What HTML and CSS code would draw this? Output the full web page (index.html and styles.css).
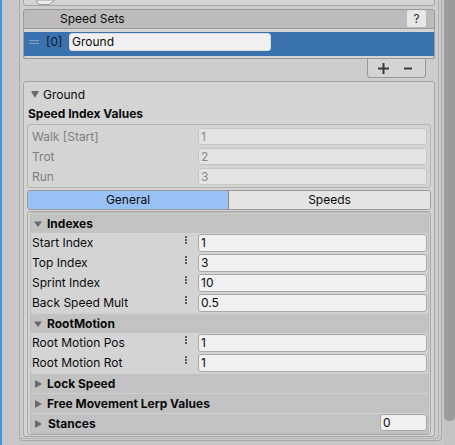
FILE: index.html
```html
<!DOCTYPE html>
<html>
<head>
<meta charset="utf-8">
<link rel="stylesheet" href="styles.css">
</head>
<body>
<div class="app">
  <div class="focus"></div>
  <div class="main">
    <div class="outer">
      <div class="inner">
        <div class="topbox">
          <svg class="topicon" width="20" height="6" viewBox="0 0 20 6"><path d="M1 0 V2 Q1 4.5 4 4.5 H12 Q14 4.5 15 3 L17.5 1.5 Q18.5 0.8 18 0 Z" fill="#ebebeb" stroke="#9c9c9c" stroke-width="1"/></svg>
        </div>
        <div class="list-head">
          <span class="list-title">Speed Sets</span>
          <span class="help">?</span>
        </div>
        <div class="list-body">
          <div class="row-sel">
            <span class="handle"><i></i><i></i></span>
            <span class="idx">[0]</span>
            <span class="tf">Ground</span>
          </div>
        </div>
        <div class="list-foot">
          <svg width="11" height="11" viewBox="0 0 11 11"><rect x="0" y="4.5" width="11" height="2" fill="#3a3a3a"/><rect x="4.5" y="0" width="2" height="11" fill="#3a3a3a"/></svg>
          <svg class="minus" width="8" height="11" viewBox="0 0 8 11"><rect x="0" y="4.5" width="8" height="2" fill="#3a3a3a"/></svg>
        </div>
        <div class="gbox">
          <div class="gfold">
            <svg class="tri-g" width="8" height="7" viewBox="0 0 8 7"><polygon points="0,0 8,0 4,7" fill="#6a6a6a"/></svg>
            <span>Ground</span>
          </div>
          <div class="siv">Speed Index Values</div>
          <div class="disabled">
            <span class="dlabel">Walk [Start]</span><span class="dfield">1</span>
            <span class="dlabel">Trot</span><span class="dfield">2</span>
            <span class="dlabel">Run</span><span class="dfield">3</span>
          </div>
          <div class="tabs">
            <div class="tab on">General</div>
            <div class="tab">Speeds</div>
          </div>
          <div class="content">
            <div class="content-in">
              <div class="hdr">
                <svg class="tri" width="8" height="8" viewBox="0 0 8 8"><polygon points="0,1.5 8,1.5 4,7" fill="#6a6a6a"/></svg>
                <span>Indexes</span>
              </div>
              <div class="frow"><span class="flabel">Start Index</span><svg class="dots" width="2" height="8" viewBox="0 0 2 8"><rect y="0" width="2" height="2" fill="#5a5a5a"/><rect y="3" width="2" height="2" fill="#5a5a5a"/><rect y="6" width="2" height="2" fill="#5a5a5a"/></svg><span class="field">1</span></div>
              <div class="frow"><span class="flabel">Top Index</span><svg class="dots" width="2" height="8" viewBox="0 0 2 8"><rect y="0" width="2" height="2" fill="#5a5a5a"/><rect y="3" width="2" height="2" fill="#5a5a5a"/><rect y="6" width="2" height="2" fill="#5a5a5a"/></svg><span class="field">3</span></div>
              <div class="frow"><span class="flabel">Sprint Index</span><svg class="dots" width="2" height="8" viewBox="0 0 2 8"><rect y="0" width="2" height="2" fill="#5a5a5a"/><rect y="3" width="2" height="2" fill="#5a5a5a"/><rect y="6" width="2" height="2" fill="#5a5a5a"/></svg><span class="field">10</span></div>
              <div class="frow"><span class="flabel">Back Speed Mult</span><svg class="dots" width="2" height="8" viewBox="0 0 2 8"><rect y="0" width="2" height="2" fill="#5a5a5a"/><rect y="3" width="2" height="2" fill="#5a5a5a"/><rect y="6" width="2" height="2" fill="#5a5a5a"/></svg><span class="field">0.5</span></div>
              <div class="hdr">
                <svg class="tri" width="8" height="8" viewBox="0 0 8 8"><polygon points="0,1.5 8,1.5 4,7" fill="#6a6a6a"/></svg>
                <span>RootMotion</span>
              </div>
              <div class="frow"><span class="flabel">Root Motion Pos</span><svg class="dots" width="2" height="8" viewBox="0 0 2 8"><rect y="0" width="2" height="2" fill="#5a5a5a"/><rect y="3" width="2" height="2" fill="#5a5a5a"/><rect y="6" width="2" height="2" fill="#5a5a5a"/></svg><span class="field">1</span></div>
              <div class="frow"><span class="flabel">Root Motion Rot</span><svg class="dots" width="2" height="8" viewBox="0 0 2 8"><rect y="0" width="2" height="2" fill="#5a5a5a"/><rect y="3" width="2" height="2" fill="#5a5a5a"/><rect y="6" width="2" height="2" fill="#5a5a5a"/></svg><span class="field">1</span></div>
              <div class="hdr">
                <svg class="tri" width="8" height="8" viewBox="0 0 8 8"><polygon points="1,0 8,4 1,8" fill="#6a6a6a"/></svg>
                <span>Lock Speed</span>
              </div>
              <div class="hdr">
                <svg class="tri" width="8" height="8" viewBox="0 0 8 8"><polygon points="1,0 8,4 1,8" fill="#6a6a6a"/></svg>
                <span>Free Movement Lerp Values</span>
              </div>
              <div class="hdr">
                <svg class="tri" width="8" height="8" viewBox="0 0 8 8"><polygon points="1,0 8,4 1,8" fill="#6a6a6a"/></svg>
                <span class="st">Stances</span>
                <span class="sfield">0</span>
              </div>
            </div>
          </div>
        </div>
      </div>
    </div>
  </div>
  <div class="scroll"><div class="thumb"></div></div>
</div>
</body>
</html>
```

FILE: styles.css
```css
* { box-sizing: border-box; }
html, body { margin: 0; padding: 0; }
body {
  width: 455px;
  height: 445px;
  overflow: hidden;
  background: #c8c8c8;
  font-family: Inter, "Noto Sans", "Liberation Sans", sans-serif;
  font-size: 12px;
  color: #0b0b0b;
}
.app { display: flex; height: 445px; }
.focus { width: 2px; flex: none; background: #3a96de; }
.main { flex: none; width: 442px; padding-left: 17px; }
.scroll { width: 11px; flex: none; background: #c3c3c3; }
.thumb { height: 421px; background: #9b9b9b; border-radius: 0 0 5px 5px; }

.outer {
  width: 423px;
  border: 1px solid #a9a9a9;
  border-top: none;
  border-radius: 0 0 4px 4px;
  padding: 0 2px 1px 0;
  background: #cdcdcd;
}
.inner {
  border-right: 1px solid #b2b2b2;
  border-bottom: 1px solid #b2b2b2;
  border-radius: 0 0 4px 0;
  padding: 0 3px 1px 3px;
}

.topbox {
  height: 6px;
  border: 1px solid #a6a6a6;
  border-top: none;
  border-radius: 0 0 3px 3px;
  background: #d4d4d4;
  margin-bottom: 3px;
  display: flex;
  align-items: flex-start;
}
.topicon { margin-left: 12px; display: block; }

.list-head {
  height: 20px;
  border: 1px solid #999999;
  border-radius: 3px 3px 0 0;
  background: #bcbcbc;
  display: flex;
  align-items: flex-start;
  padding-left: 36px;
}
.list-title { line-height: 18px; }
.help {
  margin-left: auto;
  margin-right: 8px;
  width: 19px;
  height: 17px;
  background: #e7e7e7;
  border-radius: 2px;
  text-align: center;
  line-height: 17px;
  color: #2a2a2a;
}
.list-body {
  border: 1px solid #999999;
  border-top: none;
  border-radius: 0 0 3px 3px;
  padding: 3px 0 2px;
  background: #d4d4d4;
}
.row-sel {
  height: 24px;
  background: #3a72b0;
  display: flex;
  align-items: flex-start;
  padding: 1px 0 0 5px;
}
.handle {
  width: 10px;
  height: 18px;
  display: flex;
  flex-direction: column;
  justify-content: center;
  gap: 2px;
}
.handle i { display: block; height: 1px; background: #8b9bb0; }
.idx { margin-left: 7px; width: 23px; line-height: 18px; color: #0e1a2a; }
.tf {
  width: 202px;
  height: 18px;
  background: #f0f0f0;
  border: 1px solid #dcdcdc;
  border-radius: 3px;
  padding-left: 2px;
  line-height: 16px;
}
.list-foot {
  width: 59px;
  height: 19px;
  margin-left: auto;
  margin-right: 9px;
  margin-bottom: 3px;
  border: 1px solid #999999;
  border-top: none;
  border-radius: 0 0 4px 4px;
  background: #d4d4d4;
  display: flex;
  align-items: center;
  padding-left: 10px;
}
.list-foot svg { display: block; }
.minus { margin-left: 15px; }

.gbox {
  border: 1px solid #a6a6a6;
  border-radius: 3px;
  padding: 0 3px 1px;
  background: #d4d4d4;
}
.gfold {
  height: 22px;
  padding: 2px 0 0 4px;
  display: flex;
  align-items: center;
}
.tri-g { display: block; margin-right: 4px; }
.siv { height: 20px; line-height: 20px; font-weight: 700; padding-left: 1px; }
.disabled {
  border: 1px solid #b3b3b3;
  border-radius: 3px;
  padding: 3px 3px 2px 4px;
  display: grid;
  grid-template-columns: 1fr 229px;
  grid-auto-rows: 17px;
  row-gap: 3px;
}
.dlabel { line-height: 17px; color: #7f7f7f; }
.dfield {
  height: 17px;
  background: #e3e3e3;
  border: 1px solid #c6c6c6;
  border-radius: 3px;
  padding-left: 2px;
  line-height: 15px;
  color: #8a8a8a;
}
.tabs {
  margin-top: 2px;
  height: 20px;
  display: flex;
  border: 1px solid #999999;
  border-radius: 3px;
  overflow: hidden;
}
.tab { line-height: 18px; text-align: center; background: #e4e4e4; width: 201px; }
.tab.on { width: 201px; background: #98c2f5; border-right: 1px solid #8a8a8a; }

.content {
  margin-top: 1px;
  border: 1px solid #a8a8a8;
  border-radius: 3px;
  padding: 0 1px 0 2px;
}
.content-in {
  border: 1px solid #bcbcbc;
  border-radius: 2px;
}
.hdr {
  height: 20px;
  background: #c2c2c2;
  border-top: 1px solid #d0d0d0;
  display: flex;
  align-items: center;
  padding-left: 3px;
  font-weight: 700;
}
.tri { display: block; margin-right: 5px; }
.st { margin-left: 1px; }
.sfield {
  align-self: flex-start;
  margin-left: auto;
  margin-right: 1px;
  width: 47px;
  height: 17px;
  background: #f0f0f0;
  border: 1px solid #a8a8a8;
  border-radius: 3px;
  padding-left: 2px;
  line-height: 15px;
  font-weight: 400;
}
.frow {
  height: 20px;
  display: grid;
  grid-template-columns: 150px 16px 229px;
  align-items: start;
  padding-left: 1px;
}
.flabel { margin-top: 1px; line-height: 18px; }
.dots { display: block; margin: 3px 0 0 3px; }
.field {
  margin-top: 1px;
  height: 18px;
  background: #f0f0f0;
  border: 1px solid #a8a8a8;
  border-radius: 3px;
  padding-left: 2px;
  line-height: 16px;
}
```
